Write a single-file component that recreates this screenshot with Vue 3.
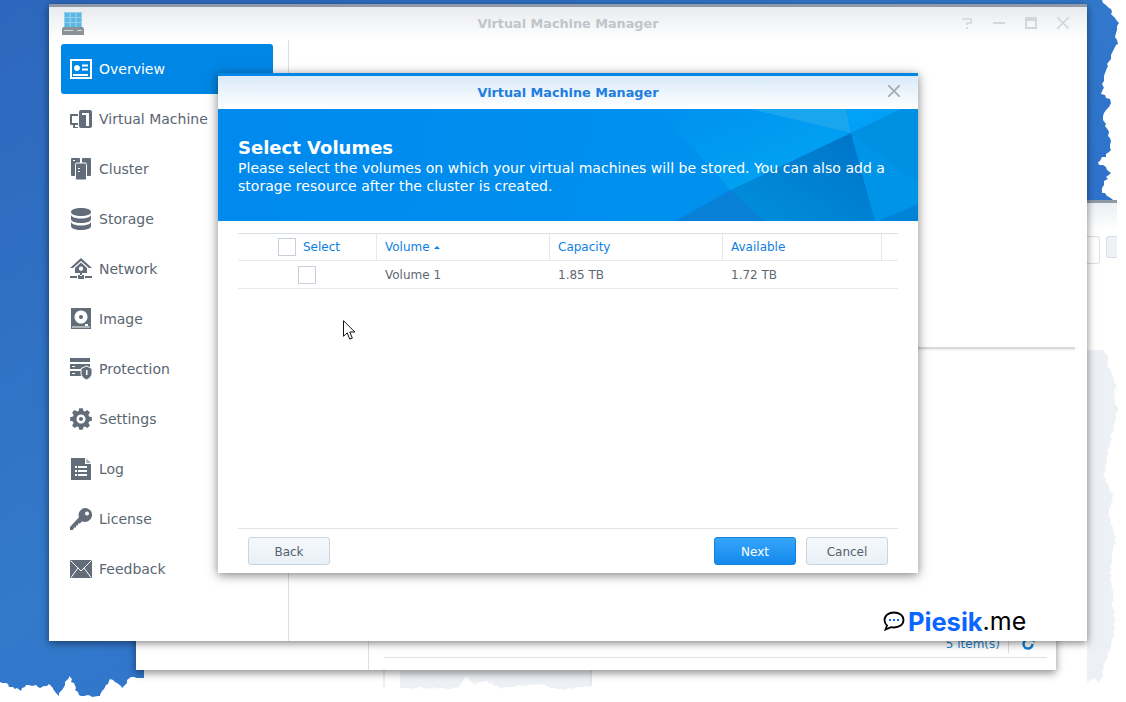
<template>
  <div class="desktop">
    <svg class="backdrop" width="1126" height="702" viewBox="0 0 1126 702">
      <defs>
        <linearGradient id="wall" x1="0" y1="0" x2="1" y2="1">
          <stop offset="0" stop-color="#2d67bd" />
          <stop offset="0.45" stop-color="#337acb" />
          <stop offset="1" stop-color="#2563ce" />
        </linearGradient>
      </defs>
      <polygon :points="wallEdge" fill="url(#wall)" />
      <polygon :points="paleEdge" fill="#edf0f5" />
      <polygon :points="paleBottom" fill="#edf0f5" />
      <path d="M384 670v17M591 670v15" stroke="#d9dde2" />
    </svg>

    <!-- windows left open behind the main one -->
    <section class="window back-top">
      <div class="back-bar"></div>
      <div class="back-inputs"><span class="back-input"></span><span class="back-input short"></span></div>
    </section>
    <section class="window back-main">
      <span class="back-divider"></span>
      <div class="back-status">
        <span class="items">5 item(s)</span>
        <svg width="14" height="14" viewBox="0 0 14 14" class="refresh">
          <path d="M11.5 7a4.5 4.5 0 1 1-1.6-3.4" fill="none" stroke="#0f7ed2" stroke-width="2.400" />
          <path d="M8 .5h5.500V6z" fill="#0f7ed2" />
        </svg>
      </div>
      <div class="back-line"></div>
    </section>

    <section class="window main-window">
      <header class="main-title">
        <svg class="app-logo" width="22" height="23" viewBox="0 0 22 23">
          <path d="M2 0h18v15H2z" fill="#8ed0ee" />
          <path d="M3 1h4.500v4H3zM8.800 1h4.500v4H8.800zM14.500 1H19v4h-4.500zM3 6h4.500v4H3zM8.800 6h4.500v4H8.800zM14.500 6H19v4h-4.500zM3 11h4.500v4H3zM8.800 11h4.500v4H8.800zM14.500 11H19v4h-4.500z" fill="#5fb6e2" />
          <path d="M1 15h20l1 2v6H0v-6z" fill="#8b9298" />
          <path d="M2 18h9v1H2zM15 18h5v1h-5z" fill="#d5d9dc" />
        </svg>
        <span>Virtual Machine Manager</span>
        <div class="controls">
          <svg width="12" height="12" viewBox="0 0 12 12"><path d="M1 2h9v4H6v2M6 10v2" fill="none" stroke="#d3d6da" stroke-width="1.600" /></svg>
          <svg width="12" height="12" viewBox="0 0 12 12"><path d="M0 6h12" stroke="#d3d6da" stroke-width="2" /></svg>
          <svg width="12" height="12" viewBox="0 0 12 12"><path d="M1 1h10v10H1zM1 3h10" fill="none" stroke="#d3d6da" stroke-width="2" /></svg>
          <svg width="12" height="12" viewBox="0 0 12 12"><path d="M0 0l12 12M12 0L0 12" stroke="#d3d6da" stroke-width="1.600" /></svg>
        </div>
      </header>
      <div class="main-body">
        <nav class="sidebar">
          <a v-for="item in navItems" :key="item.name" class="nav-item" :class="{ active: item.active }">
            <svg class="nav-icon" width="22" height="22" viewBox="0 0 22 22">
              <path
                v-for="(p, i) in item.paths"
                :key="i"
                :d="p.d"
                :fill="p.fill || (p.stroke ? 'none' : iconColor)"
                :stroke="p.stroke"
                fill-rule="evenodd"
              />
            </svg>
            <span>{{ item.name }}</span>
          </a>
        </nav>
        <div class="main-content">
          <div class="content-line"></div>
        </div>
      </div>
    </section>

    <section class="window dialog">
      <header class="dialog-title">
        <span>Virtual Machine Manager</span>
        <svg class="dialog-close" width="12" height="12" viewBox="0 0 12 12"><path d="M0 0l12 12M12 0L0 12" stroke="#a4abb2" stroke-width="1.800" /></svg>
      </header>
      <div class="banner">
        <svg class="banner-art" width="700" height="112" viewBox="0 0 700 112">
          <defs>
            <linearGradient id="band" x1="0" y1="0" x2="1" y2="1">
              <stop offset="0" stop-color="#0090ee" />
              <stop offset="1" stop-color="#00a8f5" />
            </linearGradient>
            <linearGradient id="shade" x1="1" y1="0" x2="0" y2="1">
              <stop offset="0" stop-color="#0072c8" />
              <stop offset="1" stop-color="#0090dc" />
            </linearGradient>
          </defs>
          <polygon points="440,0 532,0 633,24 513,81" fill="url(#band)" />
          <polygon points="532,0 628,0 633,24" fill="#1aa6ef" />
          <polygon points="628,0 683,0 633,24" fill="#00a1f6" />
          <polygon points="683,0 700,0 700,74 633,24" fill="#0090e2" />
          <polygon points="633,24 513,81 547,112 657,112" fill="url(#shade)" />
          <polygon points="513,81 547,112 457,112" fill="#0880d8" />
          <polygon points="633,24 700,74 700,95 657,112" fill="#0094e8" />
          <polygon points="660,112 700,95 700,112" fill="#0082d6" />
        </svg>
        <h2>Select Volumes</h2>
        <p>Please select the volumes on which your virtual machines will be stored. You can also add a storage resource after the cluster is created.</p>
      </div>
      <div class="dialog-body">
        <div class="grid head">
          <div class="cell select-cell"><span class="check"></span><span>Select</span></div>
          <div class="cell">Volume<i class="sort"></i></div>
          <div class="cell">Capacity</div>
          <div class="cell">Available</div>
          <div class="cell last"></div>
        </div>
        <div class="grid row">
          <div class="cell select-cell"><span class="check shifted"></span></div>
          <div class="cell">Volume 1</div>
          <div class="cell">1.85 TB</div>
          <div class="cell">1.72 TB</div>
          <div class="cell last"></div>
        </div>
      </div>
      <footer class="dialog-footer">
        <button class="btn">Back</button>
        <span class="spacer"></span>
        <button class="btn primary">Next</button>
        <button class="btn">Cancel</button>
      </footer>
    </section>

    <svg class="cursor" width="14" height="21" viewBox="0 0 14 21">
      <path d="M.5.700v15.600l3.700-3.400 2.500 6.200 2.600-1-2.500-6.100h5z" fill="#fff" stroke="#111" />
    </svg>

    <div class="watermark">
      <svg width="22" height="20" viewBox="0 0 22 20">
        <path d="M11 1.500c5 0 9.500 2.800 9.500 7.500S16 16.500 11 16.500c-1 0-2-.1-3-.4L2.500 18.500l1.500-4C2.300 13 1.500 11 1.500 9 1.500 4.300 6 1.500 11 1.500z" fill="#fff" stroke="#000" stroke-width="1.800" />
        <path d="M6 9h2M10 9h2M14 9h2" stroke="#0a66ff" stroke-width="2" />
      </svg>
      <span class="mark-name">Piesik</span><span class="mark-tld">.me</span>
    </div>
  </div>
</template>

<script setup>
const iconColor = "#626d79";

// adds small deterministic noise so the torn edge isn't made of long straight cuts
function roughen(points) {
  const out = [];
  let seed = 7;
  const noise = () => {
    seed = (seed * 16807) % 2147483647;
    return (seed % 1000) / 1000 - 0.5;
  };
  for (let i = 0; i < points.length - 1; i++) {
    const [x1, y1] = points[i];
    const [x2, y2] = points[i + 1];
    const steps = Math.max(1, Math.round(Math.hypot(x2 - x1, y2 - y1) / 3));
    for (let s = 0; s < steps; s++) {
      const t = s / steps;
      out.push([Math.round(x1 + (x2 - x1) * t + noise() * 3), Math.round(y1 + (y2 - y1) * t + noise() * 2)]);
    }
  }
  out.push(points[points.length - 1]);
  return out;
}

const toPoints = (list) => list.map((p) => p.join(",")).join(" ");

// torn edge of the screenshot
const rightTear = [
  [1102, 0], [1110, 10], [1113, 17], [1118, 23], [1115, 33], [1117, 43], [1110, 60], [1103, 78], [1102, 93],
  [1112, 102], [1102, 115], [1108, 133], [1112, 150], [1097, 162], [1110, 172], [1103, 187], [1102, 192], [1113, 200],
];
const bottomTear = [
  [144, 678], [130, 678], [122, 688], [110, 678], [100, 697], [78, 695], [70, 676], [58, 695], [50, 685],
  [40, 688], [30, 684], [20, 690], [10, 686], [0, 682],
];
const wallEdge =
  "0,0 " + toPoints(roughen(rightTear)) + " 600,200 144,400 " + toPoints(roughen(bottomTear));

const paleEdge =
  "1087,350 " +
  toPoints(
    roughen([
      [1104, 350], [1108, 356], [1106, 362], [1116, 386], [1113, 392], [1118, 408], [1112, 432], [1106, 462], [1104, 476],
      [1114, 500], [1108, 512], [1115, 540], [1110, 566], [1114, 612], [1115, 630], [1106, 660], [1100, 684], [1094, 678],
    ]),
  ) +
  " 1087,682";

const paleBottom =
  "400,671 592,671 " +
  toPoints(roughen([[592, 686], [560, 690], [540, 684], [500, 688], [484, 680], [474, 684], [466, 676], [458, 688], [430, 688], [400, 688]]));

// 8-tooth gear with a round hole, drawn in the 22 box
function gearPath() {
  const pts = [];
  const teeth = 8;
  for (let i = 0; i < teeth; i++) {
    const a = (i / teeth) * Math.PI * 2;
    const step = (Math.PI * 2) / teeth;
    const radii = [
      [8.4, a - step * 0.38],
      [11, a - step * 0.2],
      [11, a + step * 0.2],
      [8.4, a + step * 0.38],
    ];
    for (const [r, t] of radii) {
      pts.push((11 + r * Math.cos(t)).toFixed(2) + " " + (11 + r * Math.sin(t)).toFixed(2));
    }
  }
  return "M" + pts.join("L") + "z M11 6.500a4.500 4.500 0 1 0 .01 0z M11 9a2 2 0 1 1-.01 0z";
}

const navItems = [
  {
    name: "Overview",
    active: true,
    paths: [
      { d: "M0 1h22v20H0z M2 3v16h18V3z", fill: "#fff" },
      { d: "M7 7a3 3 0 1 0 .01 0z M12 6.500h6v2h-6z M12 10.500h6v2h-6z M3 16h15v2H3z", fill: "#fff" },
    ],
  },
  {
    name: "Virtual Machine",
    paths: [
      { d: "M11 2h9a2 2 0 0 1 2 2v14a2 2 0 0 1-2 2h-9a2 2 0 0 1-2-2V4a2 2 0 0 1 2-2z M12 5v2h4v11h3V5z" },
      { d: "M1 6h7v2H2v7h6v2H5v2h3v1H3v-3H1a1 1 0 0 1-1-1V7a1 1 0 0 1 1-1z" },
    ],
  },
  {
    name: "Cluster",
    paths: [
      { d: "M2 0h7a1 1 0 0 1 1 1v16a1 1 0 0 1-1 1H2a1 1 0 0 1-1-1V1a1 1 0 0 1 1-1z M3 2v1h2V2z" },
      { d: "M13 0h7a1 1 0 0 1 1 1v16a1 1 0 0 1-1 1h-7a1 1 0 0 1-1-1V1a1 1 0 0 1 1-1z" },
      { d: "M7 5h8a1.500 1.500 0 0 1 1.500 1.500v14A1.500 1.500 0 0 1 15 22H7a1.500 1.500 0 0 1-1.500-1.500v-14A1.500 1.500 0 0 1 7 5z", fill: iconColor, stroke: "#fff" },
      { d: "M8 10h2v1H8z M8 13h2v1H8z", fill: "#fff" },
    ],
  },
  {
    name: "Storage",
    paths: [
      { d: "M11 0C5 0 1 1.600 1 4s4 4 10 4 10-1.600 10-4-4-4-10-4z" },
      { d: "M1 6.500c0 2.400 4 4 10 4s10-1.600 10-4V11c0 2.400-4 4-10 4S1 13.400 1 11z" },
      { d: "M1 13.500c0 2.400 4 4 10 4s10-1.600 10-4V18c0 2.400-4 4-10 4S1 20.400 1 18z" },
    ],
  },
  {
    name: "Network",
    paths: [
      { d: "M11 0l11 10h-3L11 3 3 10H0z" },
      { d: "M11 4.500l6 5.500v5H5v-5z M11 8.500a2.200 2.200 0 1 0 .01 0z" },
      { d: "M10 15h2v3h-2z M0 18h7v2H0z M15 18h7v2h-7z M8 17h6v4H8z" },
    ],
  },
  {
    name: "Image",
    paths: [
      { d: "M1 0h20v21H1z M11 2.500a6.500 6.500 0 1 0 .01 0z M2 18.500v1h18v-1z M15 16v2h3v-2z" },
      { d: "M11 7a2 2 0 1 1-.01 0z" },
    ],
  },
  {
    name: "Protection",
    paths: [
      { d: "M0 0h20v4H0z" },
      { d: "M0 6h20v5H0z M2 8v1h3V8z" },
      { d: "M0 13h11v5H0z M2 15v1h3v-1z" },
      { d: "M16.500 8l5.500 2.500v5c0 3-2.500 5-5.500 6.500-3-1.500-5.500-3.500-5.500-6.500v-5z", fill: iconColor, stroke: "#fff" },
      { d: "M16 12h1.500v5H16z", fill: "#fff" },
    ],
  },
  { name: "Settings", paths: [{ d: gearPath() }] },
  {
    name: "Log",
    paths: [
      { d: "M1 0h14v6h6v16H1z M5 8v2h2V8z M8 8v2h9V8z M5 12v2h2v-2z M8 12v2h9v-2z M5 16v2h2v-2z M8 16v2h9v-2z" },
      { d: "M16.500 0.500L21 5h-4.500z", fill: "#a3a9b0" },
    ],
  },
  {
    name: "License",
    paths: [
      { d: "M15 0a7 7 0 1 1-3 13.300L10 15.500H8v2H6v2H4l-1 2.500H0v-3L9 9.300A7 7 0 0 1 15 0z M17 3.500a2 2 0 1 0 .01 0z" },
    ],
  },
  {
    name: "Feedback",
    paths: [
      { d: "M0 2h22v18H0z" },
      { d: "M.5 2.500L11 13 21.500 2.500 M1 19.500L8 10 M21 19.500L14 10", stroke: "#fff" },
    ],
  },
];
</script>

<style>
html,
body {
  margin: 0;
  background: #fff;
}
</style>

<style scoped>
.desktop {
  position: relative;
  width: 1126px;
  height: 702px;
  overflow: hidden;
  background: #fff;
  font-family: "DejaVu Sans", sans-serif;
  font-size: 13px;
}

.backdrop {
  position: absolute;
  left: 0;
  top: 0;
}

.window {
  position: absolute;
  box-sizing: border-box;
  background: #fff;
}

/* back windows */
.back-top {
  left: 500px;
  top: 200px;
  width: 617px;
  height: 150px;
  background: linear-gradient(#e9edf1, #fff 30px);
}

.back-bar {
  height: 3px;
  background: #8f9aa6;
}

.back-inputs {
  display: flex;
  justify-content: flex-end;
  gap: 6px;
  margin-top: 33px;
  padding-right: 0;
}

.back-input {
  width: 30px;
  height: 26px;
  border: 1px solid #d6dee7;
  border-radius: 3px;
  background: #fff;
}

.back-input.short {
  width: 10px;
  height: 20px;
  background: #eef2f7;
  border-right: 0;
  border-radius: 3px 0 0 3px;
}

.back-main {
  left: 136px;
  top: 200px;
  width: 920px;
  height: 470px;
  box-shadow: 0 3px 8px rgba(0, 0, 0, 0.45);
  display: flex;
  flex-direction: column;
  justify-content: flex-end;
  padding: 0 9px 12px 248px;
}

.back-divider {
  position: absolute;
  left: 232px;
  top: 0;
  bottom: 0;
  width: 1px;
  background: #dcdfe2;
}

.back-status {
  display: flex;
  justify-content: flex-end;
  align-items: center;
  gap: 12px;
  height: 20px;
  padding-right: 12px;
  color: #1a7fca;
  font-size: 12px;
}

.items {
  padding-right: 8px;
  border-right: 1px solid #d7dde3;
  line-height: 18px;
}

.back-line {
  height: 1px;
  margin-top: 3px;
  background: #dde1e6;
}

/* main window */
.main-window {
  left: 49px;
  top: 4px;
  width: 1038px;
  height: 637px;
  border-top: 3px solid #8f9aa6;
  box-shadow: 0 2px 8px rgba(0, 0, 0, 0.5);
  display: flex;
  flex-direction: column;
}

.main-title {
  position: relative;
  flex: none;
  height: 33px;
  display: flex;
  align-items: center;
  justify-content: center;
  background: linear-gradient(#e8ebef, #fff);
  color: #c0c5ca;
  font-weight: 700;
  font-size: 12.800px;
}

.app-logo {
  position: absolute;
  left: 13px;
  top: 5px;
}

.controls {
  position: absolute;
  right: 18px;
  top: 10px;
  display: flex;
  gap: 20px;
}

.main-body {
  flex: 1;
  display: flex;
  min-height: 0;
}

.sidebar {
  flex: none;
  box-sizing: border-box;
  width: 240px;
  padding: 4px 15px 0 12px;
  border-right: 1px solid #dcdfe2;
  display: flex;
  flex-direction: column;
}

.nav-item {
  height: 50px;
  flex: none;
  display: flex;
  align-items: center;
  gap: 7px;
  padding-left: 9px;
  border-radius: 3px;
  color: #5a6672;
  font-size: 14px;
  white-space: nowrap;
}

.nav-item.active {
  background: #0086e5;
  color: #fff;
}

.nav-icon {
  flex: none;
}

.main-content {
  flex: 1;
  display: flex;
  flex-direction: column;
  padding: 307px 12px 0 0;
}

.content-line {
  height: 2px;
  background: #d8dadd;
  box-shadow: 0 1px 2px rgba(0, 0, 0, 0.1);
}

/* dialog */
.dialog {
  left: 218px;
  top: 73px;
  width: 700px;
  height: 500px;
  border-top: 3px solid #0086e5;
  box-shadow: 0 2px 10px rgba(0, 0, 0, 0.5);
  display: flex;
  flex-direction: column;
}

.dialog-title {
  position: relative;
  flex: none;
  height: 33px;
  display: flex;
  align-items: center;
  justify-content: center;
  background: linear-gradient(#d9eafa, #fff);
  color: #1f7ee0;
  font-weight: 700;
  font-size: 12.800px;
}

.dialog-close {
  position: absolute;
  right: 18px;
  top: 9px;
}

.banner {
  position: relative;
  flex: none;
  box-sizing: border-box;
  height: 112px;
  padding: 29px 20px 0;
  color: #fff;
  background: linear-gradient(100deg, #0089ee, #0094ee);
}

.banner-art {
  position: absolute;
  left: 0;
  top: 0;
}

.banner h2 {
  position: relative;
  margin: 0;
  font-size: 18px;
  line-height: 20px;
  font-weight: 700;
}

.banner p {
  position: relative;
  margin: 1px 0 0;
  font-size: 14px;
  line-height: 18px;
  letter-spacing: 0.03px;
}

.dialog-body {
  flex: 1;
  padding: 12px 20px 0;
  font-size: 12px;
}

.grid {
  display: grid;
  grid-template-columns: 139px 173px 173px 159px 16px;
  box-sizing: border-box;
  height: 28px;
  border-bottom: 1px solid #e6eaee;
  color: #5f6973;
}

.grid.head {
  height: 28px;
  border-top: 1px solid #d9dfe5;
  color: #0e80e2;
}

.cell {
  display: flex;
  align-items: center;
  padding-left: 8px;
  box-sizing: border-box;
}

.head .cell {
  border-right: 1px solid #e2e8ee;
}

.head .cell.last {
  border-right: 0;
}

.select-cell {
  padding-left: 40px;
  gap: 7px;
}

.check {
  width: 18px;
  height: 18px;
  box-sizing: border-box;
  border: 1px solid #c6d0da;
  background: #fff;
}

.check.shifted {
  margin-left: 20px;
}

.sort {
  width: 0;
  height: 0;
  margin-left: 4px;
  border: 3px solid transparent;
  border-top: 0;
  border-bottom: 3px solid #0e80e2;
}

.dialog-footer {
  flex: none;
  height: 45px;
  margin: 0 20px;
  padding: 8px 10px 0;
  box-sizing: border-box;
  border-top: 1px solid #e2e4e6;
  display: flex;
  gap: 10px;
  align-items: flex-start;
}

.spacer {
  flex: 1;
}

.btn {
  width: 82px;
  height: 28px;
  box-sizing: border-box;
  padding: 1px 0 0;
  border: 1px solid #c8d4e0;
  border-radius: 3px;
  background: linear-gradient(#f6f9fc, #e9f0f6);
  color: #56616c;
  font: 12px "DejaVu Sans", sans-serif;
}

.btn.primary {
  border-color: #1580d8;
  background: linear-gradient(#36a5fb, #1389ec);
  color: #fff;
}

.cursor {
  position: absolute;
  left: 343px;
  top: 320px;
}

.watermark {
  position: absolute;
  left: 883px;
  top: 606px;
  display: flex;
  align-items: center;
  height: 30px;
  font-family: Inter, sans-serif;
  font-size: 25px;
  color: #000;
}

.mark-name {
  margin-left: 3px;
  color: #0a66ff;
  font-weight: 700;
  font-size: 25.500px;
}

.mark-tld {
  font-weight: 400;
}
</style>
